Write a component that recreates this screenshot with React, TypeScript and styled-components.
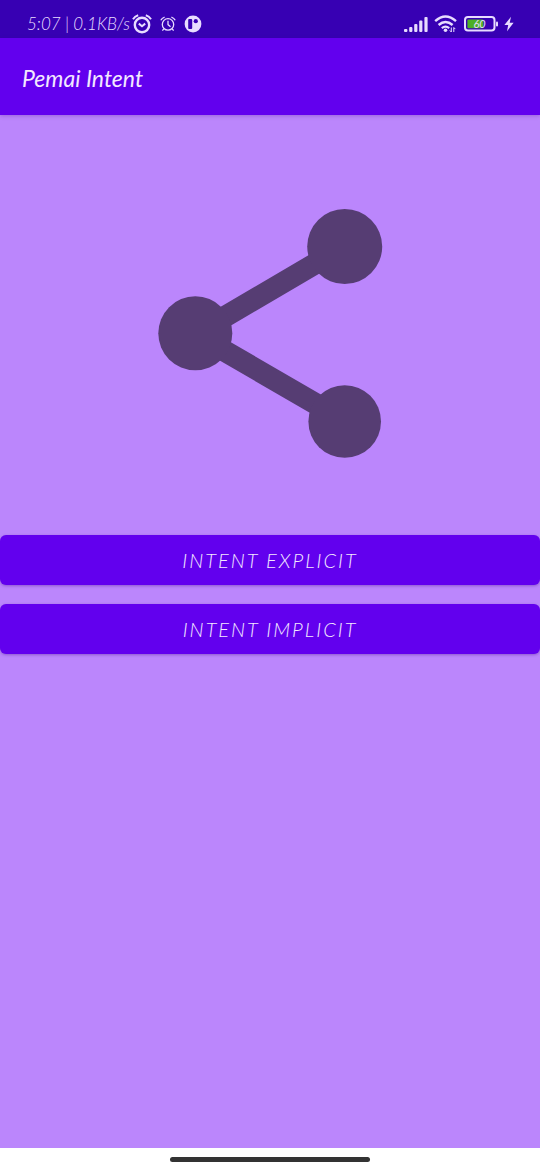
import React from "react";
import styled, { createGlobalStyle } from "styled-components";

const GlobalStyle = createGlobalStyle`
  * { box-sizing: border-box; }
  body {
    margin: 0;
    background: #bb86fc;
    font-family: Lato, "Open Sans", sans-serif;
    font-style: italic;
  }
`;

const Screen = styled.div`
  min-height: 100vh;
  display: flex;
  flex-direction: column;
`;

const StatusBar = styled.div`
  height: 38px;
  padding: 9px 26px 0 27px;
  display: flex;
  align-items: flex-start;
  justify-content: space-between;
  background: #3700b3;
  color: #e8dcff;
`;

const StatusGroup = styled.div<{ $gap: number }>`
  display: flex;
  align-items: center;
  gap: ${({ $gap }) => $gap}px;
  height: 29px;
  svg { display: block; }
`;

const StatusText = styled.span`
  font-size: 17px;
  line-height: 29px;
  font-weight: 300;
  white-space: nowrap;
`;

const AppBar = styled.header`
  position: relative;
  height: 77px;
  padding: 2px 22px 0;
  display: flex;
  align-items: center;
  background: #6200ee;
  color: #f3e8ff;
  box-shadow: 0 1px 4px rgba(55, 0, 120, 0.25);
`;

const Title = styled.h1`
  margin: 0;
  font-size: 23px;
  line-height: 30px;
  font-weight: 400;
`;

const Content = styled.main`
  flex: 1;
  display: flex;
  flex-direction: column;
  padding-top: 94px;
`;

const Artwork = styled.div`
  display: flex;
  justify-content: center;
  padding-bottom: 76px;
  svg { display: block; }
`;

const Actions = styled.div`
  display: flex;
  flex-direction: column;
  gap: 19px;
`;

const ActionButton = styled.button`
  width: 100%;
  height: 50px;
  padding: 0 16px;
  border: 0;
  border-radius: 6px;
  background: #6200ee;
  color: #f3e8ff;
  font: inherit;
  font-size: 20px;
  font-weight: 300;
  line-height: 24px;
  letter-spacing: 2px;
  text-transform: uppercase;
  cursor: pointer;
  box-shadow: 0 1px 3px rgba(55, 0, 120, 0.35);
`;

const GestureArea = styled.footer`
  height: 22px;
  display: flex;
  align-items: center;
  justify-content: center;
  background: #fff;
`;

const GestureHandle = styled.div`
  width: 37%;
  height: 5px;
  border-radius: 3px;
  background: #333;
`;

const BatteryLabel = styled.text`
  font-family: Lato, sans-serif;
  font-size: 11px;
  font-style: italic;
`;

const AlarmBold = () => (
  <svg width="20" height="20" viewBox="0 0 20 20" fill="none" stroke="currentColor" aria-hidden="true">
    <circle cx="10" cy="11" r="7.2" strokeWidth="2.4" />
    <path d="M6.8 9.6 10 12.2l3.2-2.6" strokeWidth="2" />
    <path d="M1 5.2Q2.8 2.2 6.2 1.2M19 5.2Q17.2 2.2 13.8 1.2" strokeWidth="2" />
  </svg>
);

const AlarmThin = () => (
  <svg width="16" height="16" viewBox="0 0 16 16" fill="none" stroke="currentColor" aria-hidden="true">
    <circle cx="8" cy="8.4" r="5.7" strokeWidth="1.3" />
    <path d="M8 4.8v3.8l2.5 2.2M3.8 12.8l-1.4 1.8M12.2 12.8l1.4 1.8" strokeWidth="1.3" />
    <path d="M.8 4.3Q2 2 4.6 1.1M15.2 4.3Q14 2 11.4 1.1" strokeWidth="1.4" />
  </svg>
);

const AppBadge = () => (
  <svg width="18" height="18" viewBox="0 0 18 18" aria-hidden="true">
    <circle cx="9" cy="9" r="8.4" fill="currentColor" />
    <rect x="4.2" y="4" width="4" height="10" rx="1" fill="#3700b3" />
    <circle cx="11.8" cy="6.2" r="2.1" fill="#3700b3" />
  </svg>
);

const Signal = () => (
  <svg width="24" height="18" viewBox="0 0 24 18" fill="currentColor" aria-hidden="true">
    <rect x="0" y="14" width="3.4" height="3" rx="1" />
    <rect x="5.2" y="12" width="3.2" height="5" rx="1" />
    <rect x="10.2" y="9" width="3.2" height="8" rx="1" />
    <rect x="15.2" y="5.5" width="3.2" height="11.5" rx="1" />
    <rect x="20.4" y="2" width="3.2" height="15" rx="1" />
  </svg>
);

const Wifi = () => (
  <svg width="24" height="18" viewBox="0 0 24 18" fill="none" stroke="currentColor" aria-hidden="true">
    <path d="M1.2 6.2Q11.5-3.2 22 6.2" strokeWidth="2.4" />
    <path d="M4.6 10Q11.5 3.8 18.6 10" strokeWidth="2.4" />
    <path d="M7.8 13.2Q11.5 10 15.2 13.2" strokeWidth="2.2" />
    <circle cx="11.5" cy="15.2" r="1.8" fill="currentColor" stroke="none" />
    <path d="M17.3 12.5v4.5l-1.5-1.6M19.8 17v-4.5l1.5 1.6" strokeWidth="1" />
  </svg>
);

const Battery = () => (
  <svg width="34" height="16" viewBox="0 0 34 16" role="img" aria-label="Battery 60 percent">
    <rect x="1" y="1" width="29.5" height="13.6" rx="3" fill="none" stroke="currentColor" strokeWidth="2" />
    <rect x="3.4" y="3.4" width="16" height="8.8" rx="1" fill="#4caf25" />
    <rect x="32" y="5.5" width="2" height="5" rx="1" fill="currentColor" />
    <BatteryLabel x="15.5" y="11.8" textAnchor="middle" fill="#e8dcff">60</BatteryLabel>
  </svg>
);

const Bolt = () => (
  <svg width="10" height="16" viewBox="0 0 10 16" fill="currentColor" aria-hidden="true">
    <path d="M7 .8.4 9h3.8L3 15.2 9.6 6.8H5.7z" />
  </svg>
);

const ShareGraphic = () => (
  <svg width="225" height="250" viewBox="0 0 225 250" role="img" aria-label="Share" fill="#563d73" stroke="none">
    <path d="M40 123.4 180 41.3M45 129.5 180 207.8" stroke="#563d73" strokeWidth="21.4" />
    <circle cx="186.7" cy="37.5" r="37.5" />
    <circle cx="37.3" cy="124.3" r="37" />
    <circle cx="186.7" cy="212.5" r="36.3" />
  </svg>
);

export default function App() {
  return (
    <>
      <GlobalStyle />
      <Screen>
        <StatusBar>
          <StatusGroup $gap={2}>
            <StatusText>5:07 | 0.1KB/s</StatusText>
            <StatusGroup $gap={8}>
              <AlarmBold />
              <AlarmThin />
              <AppBadge />
            </StatusGroup>
          </StatusGroup>
          <StatusGroup $gap={6}>
            <Signal />
            <Wifi />
            <Battery />
            <Bolt />
          </StatusGroup>
        </StatusBar>
        <AppBar>
          <Title>Pemai Intent</Title>
        </AppBar>
        <Content>
          <Artwork>
            <ShareGraphic />
          </Artwork>
          <Actions>
            <ActionButton type="button">Intent Explicit</ActionButton>
            <ActionButton type="button">Intent Implicit</ActionButton>
          </Actions>
        </Content>
        <GestureArea>
          <GestureHandle />
        </GestureArea>
      </Screen>
    </>
  );
}
